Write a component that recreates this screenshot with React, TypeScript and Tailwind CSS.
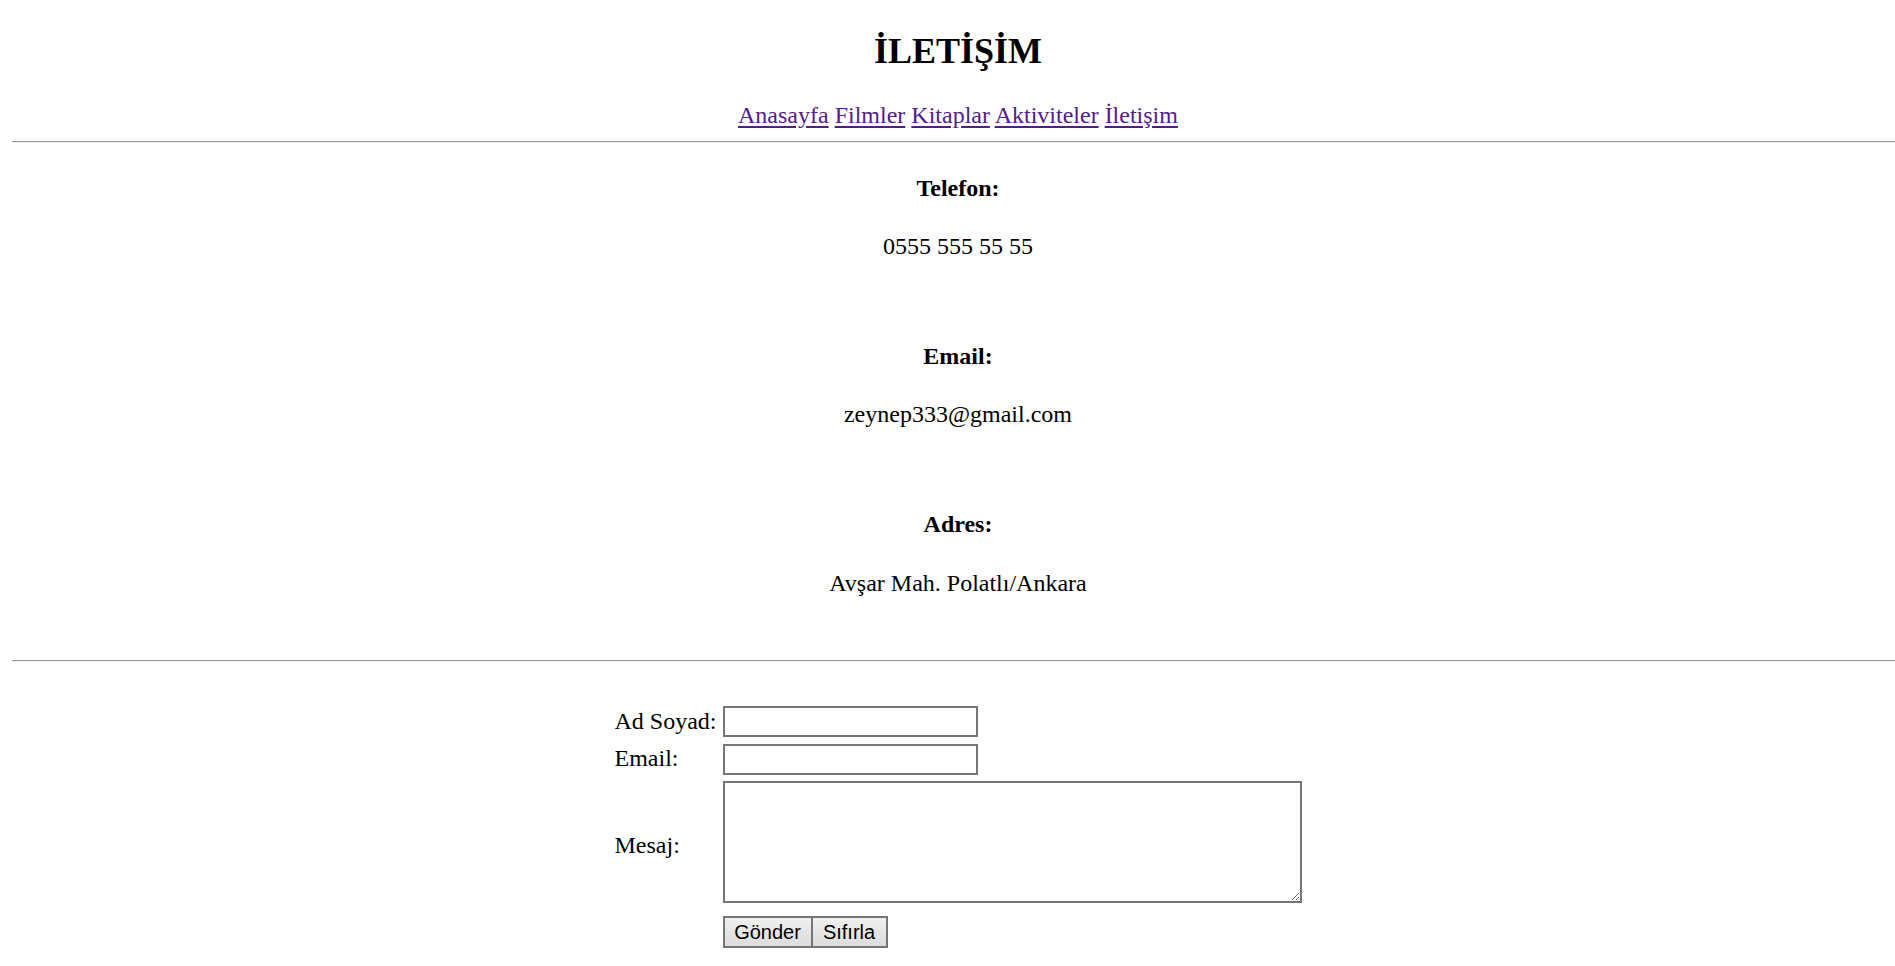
import { useState } from 'react'

const links = ['Anasayfa', 'Filmler', 'Kitaplar', 'Aktiviteler', 'İletişim']

const contacts = [
  { label: 'Telefon:', value: '0555 555 55 55', top: 'mt-[31px]', gap: 'mt-[30px]' },
  { label: 'Email:', value: 'zeynep333@gmail.com', top: 'mt-[82px]', gap: 'mt-[30px]' },
  { label: 'Adres:', value: 'Avşar Mah. Polatlı/Ankara', top: 'mt-[82px]', gap: 'mt-[31px]' },
]

function Rule({ className = '' }: { className?: string }) {
  return <div className={`h-[2px] border-t border-b border-t-[#9a9a9a] border-b-[#eeeeee] ${className}`}></div>
}

export default function App() {
  const [name, setName] = useState('')
  const [email, setEmail] = useState('')
  const [message, setMessage] = useState('')

  const reset = () => {
    setName('')
    setEmail('')
    setMessage('')
  }

  return (
    <div className="w-full min-h-screen overflow-hidden bg-white text-black font-['Liberation_Serif','Times_New_Roman',serif]">
      <div className="ml-[12px] w-[1892px] pb-[12px]">
        <h1 className="pt-[30px] text-center text-[36px] leading-[42px] font-bold">İLETİŞİM</h1>

        {/* Nav */}
        <div className="mt-[29px] text-center text-[24px] leading-[28px]">
          {links.map((link, i) => (
            <span key={link}>
              <a href="#" className="text-[#551a8b] underline underline-offset-[3px]">
                {link}
              </a>
              {i < links.length - 1 && ' '}
            </span>
          ))}
        </div>

        <Rule className="mt-[12px]" />

        {/* Contact info */}
        <div className="text-center text-[24px] leading-[28px]">
          {contacts.map((c) => (
            <div key={c.label} className={c.top}>
              <div className="font-bold">{c.label}</div>
              <div className={c.gap}>{c.value}</div>
            </div>
          ))}
        </div>

        <Rule className="mt-[63px]" />

        {/* Form */}
        <form
          className="mx-auto mt-[44px] grid w-fit grid-cols-[auto_auto] items-center gap-x-[6px] text-[24px] leading-[28px]"
          onSubmit={(e) => e.preventDefault()}
        >
          <label className="mb-[2px] whitespace-nowrap">Ad Soyad:</label>
          <input
            value={name}
            onChange={(e) => setName(e.target.value)}
            className="h-[31px] w-[255px] border-2 border-[#767676] bg-white px-[3px] outline-none"
          />

          <label className="mt-[3px] whitespace-nowrap">Email:</label>
          <input
            value={email}
            onChange={(e) => setEmail(e.target.value)}
            className="mt-[7px] h-[31px] w-[255px] border-2 border-[#767676] bg-white px-[3px] outline-none"
          />

          <label className="mt-[11px] whitespace-nowrap">Mesaj:</label>
          <textarea
            value={message}
            onChange={(e) => setMessage(e.target.value)}
            className="mt-[6px] block h-[122px] w-[579px] resize border-2 border-[#767676] bg-white outline-none"
          />

          <div></div>
          <div className="mt-[13px] flex font-['Liberation_Sans',Arial,sans-serif] text-[20px] leading-[24px]">
            <button
              type="submit"
              className="h-[32px] w-[90px] border-2 border-[#767676] bg-gradient-to-b from-[#f0f0f0] to-[#dcdcdc] text-black"
            >
              Gönder
            </button>
            <button
              type="button"
              onClick={reset}
              className="h-[32px] w-[75px] border-2 border-l-0 border-[#767676] bg-gradient-to-b from-[#f0f0f0] to-[#dcdcdc] text-black"
            >
              Sıfırla
            </button>
          </div>
        </form>
      </div>
    </div>
  )
}
